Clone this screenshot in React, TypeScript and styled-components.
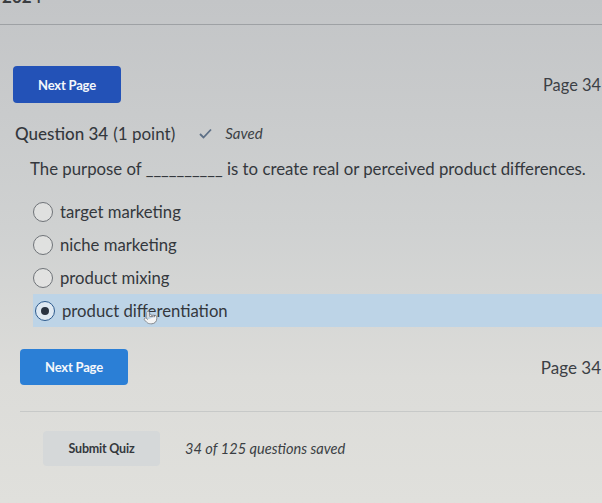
import React from "react";
import styled, { createGlobalStyle } from "styled-components";
import { Pointer } from "lucide-react";

const Global = createGlobalStyle`
  html, body { margin: 0; padding: 0; }
  body {
    width: 602px;
    height: 503px;
    overflow: hidden;
    font-family: Lato, "Noto Sans", "Liberation Sans", sans-serif;
    color: #35393e;
    background: linear-gradient(180deg, #c3c5c7 0%, #cfd1d1 45%, #dcdcd9 75%, #e0e0dc 100%);
  }
`;

const Page = styled.div`
  width: 602px;
  height: 503px;
  display: flex;
  flex-direction: column;
  overflow: hidden;
`;

const TopStrip = styled.div`
  height: 24px;
  overflow: hidden;
  border-bottom: 1px solid #9ea1a4;
`;

const DateText = styled.div`
  margin-top: -12px;
  margin-left: -6px;
  font-size: 17px;
  font-weight: 700;
  color: #3a3d41;
  line-height: 18px;
`;

const NavRow = styled.div<{ $pl: number; $mt: number }>`
  display: flex;
  align-items: center;
  justify-content: space-between;
  padding-left: ${(p) => p.$pl}px;
  margin-top: ${(p) => p.$mt}px;
`;

const Button = styled.div<{ $bg: string; $w: number; $h: number }>`
  width: ${(p) => p.$w}px;
  height: ${(p) => p.$h}px;
  background: ${(p) => p.$bg};
  border-radius: 4px;
  color: #f4f7fb;
  font-size: 13px;
  font-weight: 700;
  display: flex;
  align-items: center;
  justify-content: center;
  letter-spacing: -0.2px;
`;

const PageLabel = styled.div<{ $size: number }>`
  font-size: ${(p) => p.$size}px;
  color: #3c4045;
  margin-right: 1px;
  white-space: nowrap;
`;

const QuestionHead = styled.div`
  display: flex;
  align-items: center;
  margin-top: 20px;
  padding-left: 15px;
  height: 20px;
`;

const QTitle = styled.span`
  font-size: 17px;
  font-weight: 500;
  color: #34383d;
`;

const QPoints = styled.span`
  font-size: 17px;
  font-weight: 400;
  color: #34383d;
  margin-left: 5px;
`;

const SavedWrap = styled.span`
  display: flex;
  align-items: center;
  margin-left: 24px;
  gap: 13px;
  font-size: 15px;
  font-style: italic;
  color: #3b3f44;
`;

const QuestionText = styled.div`
  margin-top: 16px;
  padding-left: 30px;
  font-size: 16.8px;
  color: #34383d;
  white-space: nowrap;
  line-height: 20px;
`;

const Blank = styled.span`
  letter-spacing: 0px;
`;

const Options = styled.div`
  display: flex;
  flex-direction: column;
  margin-top: 16px;
`;

const Option = styled.div<{ $sel?: boolean }>`
  position: relative;
  display: flex;
  align-items: center;
  height: 33px;
  margin-left: 33px;
  padding-left: ${(p) => (p.$sel ? 2 : 0)}px;
  background: ${(p) => (p.$sel ? "#bdd4e7" : "transparent")};
  font-size: 16.7px;
  color: #34383d;
`;

const Radio = styled.span<{ $sel?: boolean }>`
  width: 18px;
  height: 18px;
  border-radius: 50%;
  border: 1.5px solid ${(p) => (p.$sel ? "#2e5b8e" : "#6f7378")};
  background: ${(p) => (p.$sel ? "#dfe9f2" : "rgba(240,240,238,0.5)")};
  display: flex;
  align-items: center;
  justify-content: center;
  margin-right: 7px;
  flex-shrink: 0;
`;

const Dot = styled.span`
  width: 8px;
  height: 8px;
  border-radius: 50%;
  background: #2a3340;
`;

const Cursor = styled.span`
  position: absolute;
  left: 110px;
  top: 16px;
  display: flex;
`;

const Divider = styled.div`
  margin-top: 26px;
  margin-left: 20px;
  border-top: 1px solid #c7c9c8;
`;

const SubmitRow = styled.div`
  display: flex;
  align-items: center;
  margin-top: 19px;
  padding-left: 43px;
`;

const SubmitButton = styled(Button)`
  color: #34383d;
  font-size: 12.5px;
`;

const SavedCount = styled.span`
  margin-left: 25px;
  font-size: 14.6px;
  font-style: italic;
  color: #3b3f44;
`;

const Check = () => (
  <svg width="13" height="11" viewBox="0 0 13 11">
    <path d="M1 6 L4.5 9.5 L12 1.5" fill="none" stroke="#5c6f86" strokeWidth="1.8" />
  </svg>
);

const options = ["target marketing", "niche marketing", "product mixing", "product differentiation"];

export default function App() {
  return (
    <>
      <Global />
      <Page>
        <TopStrip>
          <DateText>, 2024</DateText>
        </TopStrip>
        <NavRow $pl={13} $mt={41}>
          <Button $bg="#2352b7" $w={108} $h={37}>Next Page</Button>
          <PageLabel $size={16.4}>Page 34</PageLabel>
        </NavRow>
        <QuestionHead>
          <QTitle>Question 34</QTitle>
          <QPoints>(1 point)</QPoints>
          <SavedWrap>
            <Check />
            Saved
          </SavedWrap>
        </QuestionHead>
        <QuestionText>
          The purpose of <Blank>__________</Blank> is to create real or perceived product differences.
        </QuestionText>
        <Options>
          {options.map((o, i) => {
            const sel = i === 3;
            return (
              <Option key={o} $sel={sel}>
                <Radio $sel={sel}>{sel && <Dot />}</Radio>
                {o}
                {sel && (
                  <Cursor>
                    <Pointer size={15} strokeWidth={1.6} color="#8a8f95" fill="#f5f5f5" />
                  </Cursor>
                )}
              </Option>
            );
          })}
        </Options>
        <NavRow $pl={20} $mt={22}>
          <Button $bg="#2b7fd6" $w={108} $h={36}>Next Page</Button>
          <PageLabel $size={17}>Page 34</PageLabel>
        </NavRow>
        <Divider />
        <SubmitRow>
          <SubmitButton $bg="#d5d8d9" $w={117} $h={35}>Submit Quiz</SubmitButton>
          <SavedCount>34 of 125 questions saved</SavedCount>
        </SubmitRow>
      </Page>
    </>
  );
}
